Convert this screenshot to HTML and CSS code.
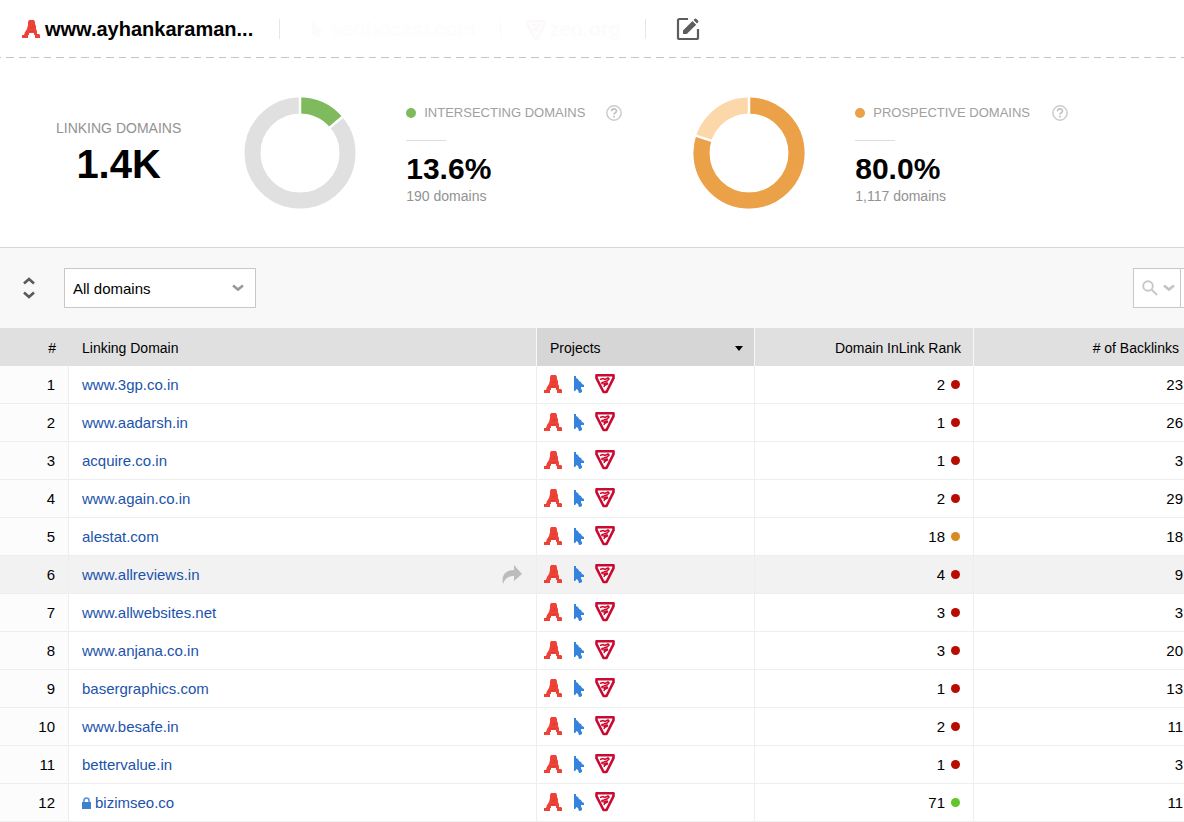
FILE: index.html
```html
<!DOCTYPE html>
<html lang="en">
<head>
<meta charset="utf-8">
<title>Domain comparison</title>
<link rel="stylesheet" href="styles.css">
</head>
<body>
<svg class="sprites" aria-hidden="true">
  <symbol id="i-a" viewBox="0 0 18 18"><path fill="#ee4236" d="M7 0h5l1 2v2l1 2v3l1 2v3h2l1 1v3h-5v-3h-1v-2H7v2H6v3H0v-3h2l1-3 2-3 1-4V2z"/><path fill="#cf3b38" d="M8 7h2V5h1v3H8zM7 11h5v1H7z" opacity=".7"/></symbol>
  <symbol id="i-cursor" viewBox="0 0 11 18"><path fill="#3583dc" d="M1 1h2v2l2 1 1 2 2 1 1 2 2 1v2H8v2l1 1v2l-2 1H6l-1-3-2-1v1l-1 1H1z"/></symbol>
  <symbol id="i-tri" viewBox="0 0 20 21"><path fill="#fff" stroke="#cb0a31" stroke-width="2.600" stroke-linejoin="round" d="M1.500 2.200h17v3l-7 13.800h-3l-7-13.800z"/><path fill="none" stroke="#cb0a31" stroke-width="1.500" d="M5 6.500l3-1 2 1 3-1.500 1 1-2 2-3 1-2 .5v1l2 .5 3-1 .5 1-3 1.500-.5 1.500"/></symbol>
  <symbol id="i-chevron" viewBox="0 0 12 8"><path fill="none" stroke="currentColor" stroke-width="2.600" d="M1 1.500L6 5.500l5-4"/></symbol>
  <symbol id="i-help" viewBox="0 0 16 16"><circle cx="8" cy="8" r="7.200" fill="none" stroke="#ccc" stroke-width="1.500"/><path fill="none" stroke="#c2c2c2" stroke-width="1.700" d="M5.500 6.300c0-3.300 5-3.200 5-.3 0 1.800-2.500 1.800-2.500 3.500M8 10.700v1.800"/></symbol>
  <symbol id="i-share" viewBox="0 0 20 19"><path fill="#bcbcbc" d="M12 0l8 9-8 7v-5C7 11 3 13 1 19-1 10 4 5 12 5z"/></symbol>
  <symbol id="i-lock" viewBox="0 0 9 12"><path fill="none" stroke="#5b93dc" stroke-width="1.600" d="M2 6V3.500a2.500 2.500 0 0 1 5 0V6"/><path fill="#3f7fd0" d="M0 5h9v7H0z"/></symbol>
</svg>

<header class="tabs">
  <div class="tab tab-main"><svg class="ico-a"><use href="#i-a"/></svg><span>www.ayhankaraman...</span></div>
  <div class="tab tab-second"><svg class="ico-cursor"><use href="#i-cursor"/></svg><span>seohocasi.com</span></div>
  <div class="tab tab-third"><svg class="ico-tri"><use href="#i-tri"/></svg><span>zeo.org</span></div>
  <button class="edit" aria-label="Edit projects"><svg width="24" height="24" viewBox="0 0 24 24"><path fill="none" stroke="#5d5d5d" stroke-width="2.200" d="M12 2H3.500Q2 2 2 3.500v17Q2 22 3.500 22h17q1.500 0 1.500-1.500V12"/><path fill="#5d5d5d" d="M7 13.500L16.500 4l3.700 3.700L10.700 17H7zM17.500 3l1-1q1-1 2 0l1.500 1.500q1 1 0 2l-1 1z"/></svg></button>
</header>

<section class="summary">
  <div class="total"><div class="total-label">LINKING DOMAINS</div><div class="total-value">1.4K</div></div>
  <svg class="donut" viewBox="0 0 112 112" role="img" aria-label="13.6%">
    <g fill="none" stroke-width="16" transform="rotate(-90 56 56)"><circle cx="56" cy="56" r="47.500" stroke="#e0e0e0"/><circle cx="56" cy="56" r="47.500" stroke="#7fba5d" pathLength="1000" stroke-dasharray="136 864"/></g>
    <path stroke="#fff" stroke-width="2.500" d="M56 56V-1M56 56L99.400 19"/>
  </svg>
  <div class="stat">
    <div class="stat-head"><i class="dot green-soft"></i><span>INTERSECTING DOMAINS</span><button class="help" aria-label="Help"><svg><use href="#i-help"/></svg></button></div>
    <div class="rule"></div>
    <div class="stat-value">13.6%</div>
    <div class="stat-sub">190 domains</div>
  </div>
  <svg class="donut donut-second" viewBox="0 0 112 112" role="img" aria-label="80.0%">
    <g fill="none" stroke-width="16" transform="rotate(-90 56 56)"><circle cx="56" cy="56" r="47.500" stroke="#fcd7a9"/><circle cx="56" cy="56" r="47.500" stroke="#eaa148" pathLength="1000" stroke-dasharray="800 200"/></g>
    <path stroke="#fff" stroke-width="2.500" d="M56 56V-1M56 56L1.800 38.400"/>
  </svg>
  <div class="stat">
    <div class="stat-head"><i class="dot orange-soft"></i><span>PROSPECTIVE DOMAINS</span><button class="help" aria-label="Help"><svg><use href="#i-help"/></svg></button></div>
    <div class="rule"></div>
    <div class="stat-value">80.0%</div>
    <div class="stat-sub">1,117 domains</div>
  </div>
</section>

<section class="toolbar">
  <button class="collapse" aria-label="Collapse summary"><svg width="12" height="22" viewBox="0 0 12 22"><path fill="none" stroke="#5a5a5a" stroke-width="2.600" d="M1 6.500l5-4.500 5 4.500M1 15.500l5 4.500 5-4.500"/></svg></button>
  <div class="select-wrap">
    <select aria-label="Domain filter"><option>All domains</option></select>
    <svg class="chev"><use href="#i-chevron"/></svg>
  </div>
  <div class="search">
    <button class="search-btn" aria-label="Search options"><svg width="16" height="16" viewBox="0 0 16 16"><g fill="none" stroke="#c8c8c8" stroke-width="1.900"><circle cx="6" cy="6" r="4.800"/><path d="M9.500 9.500L15 15"/></g></svg><svg class="chev-sm"><use href="#i-chevron"/></svg></button>
    <input type="text" aria-label="Search">
  </div>
</section>

<table>
  <colgroup><col class="c-num"><col class="c-domain"><col class="c-projects"><col class="c-rank"><col class="c-links"></colgroup>
  <thead><tr><th class="num">#</th><th class="domain">Linking Domain</th><th class="projects"><div class="sort">Projects<i class="caret"></i></div></th><th class="rank">Domain InLink Rank</th><th class="links"># of Backlinks</th></tr></thead>
  <tbody id="rows"></tbody>
</table>
<script src="rows.js"></script>
</body>
</html>
```
FILE: styles.css
```css
* { box-sizing: border-box; }
body { margin: 0; background: #fff; color: #000; font: 14px/18px "Liberation Sans", Arial, sans-serif; overflow-x: hidden; }
button { padding: 0; border: 0; background: none; display: flex; align-items: center; }
svg { display: block; flex: none; }
.sprites { position: absolute; width: 0; height: 0; }
.ico-a { width: 18px; height: 18px; }
.ico-cursor { width: 11px; height: 18px; }
.ico-tri { width: 20px; height: 21px; }

.tabs { display: flex; align-items: center; height: 58px; padding-left: 22px;
  background: repeating-linear-gradient(90deg, #c4c4c4 0 1px, #fff 1px 6px, #c4c4c4 6px 14px, #fff 14px 19px, #c4c4c4 19px 25px) left bottom / 100% 1px no-repeat; }
.tab { display: flex; align-items: center; height: 20px; border-right: 1px solid #e6e6e6; font-size: 20px; line-height: 22px; font-weight: bold; }
.tab-main { gap: 5px; padding-right: 26px; }
.tab-second { gap: 9px; padding: 0 24px 0 31px; color: #fdfdfd; border-color: #fafafa; }
.tab-third { gap: 4px; padding: 0 24px 0 25px; color: #fcfcfc; }
.tab-second svg, .tab-third svg { opacity: .02; }
.edit { margin-left: 30px; }

.summary { display: flex; align-items: center; padding: 39px 0 38px 56px; border-bottom: 1px solid #d6d6d6; }
.total { flex: none; text-align: center; }
.total-label { color: #929292; margin-bottom: 4px; }
.total-value { font-size: 40px; line-height: 46px; font-weight: bold; }
.donut { width: 112px; height: 112px; margin: 0 50px 0 63px; }
.donut-second { margin-left: 71px; }
.stat { flex: none; width: 216px; padding-top: 4px; }
.donut-second + .stat { width: 213px; }
.stat-head { display: flex; align-items: center; height: 18px; font-size: 13px; color: #a0a0a0; }
.dot { display: inline-block; flex: none; width: 10px; height: 10px; border-radius: 50%; }
.stat-head .dot { margin-right: 8px; }
.help { margin-left: auto; }
.help svg { width: 16px; height: 16px; }
.rule { width: 40px; height: 1px; margin: 18px 0 10px; background: #ddd; }
.stat-value { font-size: 30px; line-height: 36px; font-weight: bold; }
.stat-sub { color: #929292; line-height: 19px; }
.green-soft { background: #7fba5d; }
.orange-soft { background: #eaa148; }

.toolbar { display: flex; align-items: center; height: 80px; padding-left: 23px; background: #f8f8f8; overflow: hidden; }
.select-wrap { position: relative; margin-left: 29px; }
select { display: block; appearance: none; width: 192px; height: 40px; padding: 2px 8px 0; border: 1px solid #c8c8c8; border-radius: 0; background: #fff; color: #000; font: 15px/18px "Liberation Sans", Arial, sans-serif; }
.chev { position: absolute; right: 12px; top: 16px; width: 12px; height: 8px; color: #999; pointer-events: none; }
.search { display: flex; margin-left: auto; margin-right: -180px; height: 40px; border: 1px solid #c8c8c8; background: #fff; }
.search-btn { gap: 5px; padding: 0 5px 0 8px; border-right: 1px solid #c8c8c8; }
.chev-sm { width: 12px; height: 8px; color: #c4c4c4; }
.search input { width: 182px; border: 0; padding: 0 8px; }

table { width: 100%; table-layout: fixed; border-collapse: separate; border-spacing: 0; }
.c-num { width: 69px; }
.c-projects { width: 218px; }
.c-rank { width: 219px; }
.c-links { width: 210px; }
th { height: 38px; padding: 2px 12px 0; background: #e0e0e0; font-weight: normal; text-align: left; }
td { height: 38px; padding: 0 12px; border-right: 1px solid #eee; border-bottom: 1px solid #eee; }
th.domain, th.projects, th.rank { border-right: 1px solid #f8f8f8; }
.num { text-align: right; padding-right: 13px; }
td.num { background: #fcfcfc; font-size: 15px; }
.domain { padding-left: 13px; }
td.domain { font-size: 15px; }
th.projects { background: #d6d6d6; padding-left: 13px; padding-right: 11px; }
.sort { display: flex; justify-content: space-between; align-items: center; }
.caret { border: 4px solid transparent; border-top: 5px solid #000; border-bottom: 0; }
.rank { text-align: right; }
.links { text-align: right; }
th.links { padding-right: 5px; }
td.links { padding-right: 1px; border-right: 0; }
td.rank, td.links { font-size: 15px; }
td.rank { padding-right: 13px; }
td.projects { padding: 0 0 2px 7px; }
.link-row, .icons { display: flex; align-items: center; }
.link-row a { color: #1b53ab; text-decoration: none; }
.icons { gap: 11px; }
.lock { width: 9px; height: 12px; margin-right: 4px; }
.share { margin: 0 2px 0 auto; height: 19px; }
.share svg { width: 20px; height: 19px; }
.score { display: flex; justify-content: flex-end; align-items: center; gap: 6px; }
.score .dot { width: 9px; height: 9px; }
.red { background: #b80c00; }
.orange { background: #d98a20; }
.green { background: #62c52b; }
tr.hover td { background: #f2f2f2; }
```
FILE: rows.js
```js
const rows = [
  ["www.3gp.co.in", 2, "red", 23],
  ["www.aadarsh.in", 1, "red", 26],
  ["acquire.co.in", 1, "red", 3],
  ["www.again.co.in", 2, "red", 29],
  ["alestat.com", 18, "orange", 18],
  ["www.allreviews.in", 4, "red", 9],
  ["www.allwebsites.net", 3, "red", 3],
  ["www.anjana.co.in", 3, "red", 20],
  ["basergraphics.com", 1, "red", 13],
  ["www.besafe.in", 2, "red", 11],
  ["bettervalue.in", 1, "red", 3],
  ["bizimseo.co", 71, "green", 11]
];
const hovered = "www.allreviews.in";
const secure = "bizimseo.co";
const icon = (cls, id) => `<svg class="${cls}"><use href="#${id}"/></svg>`;

document.getElementById("rows").innerHTML = rows.map(([domain, rank, color, links], i) => `
  <tr class="${domain === hovered ? "hover" : ""}">
    <td class="num">${i + 1}</td>
    <td class="domain"><div class="link-row">${domain === secure ? icon("lock", "i-lock") : ""}<a href="#">${domain}</a>${domain === hovered ? `<button class="share" aria-label="Open domain">${icon("", "i-share")}</button>` : ""}</div></td>
    <td class="projects"><div class="icons">${icon("ico-a", "i-a")}${icon("ico-cursor", "i-cursor")}${icon("ico-tri", "i-tri")}</div></td>
    <td class="rank"><div class="score">${rank}<i class="dot ${color}"></i></div></td>
    <td class="links">${links}</td>
  </tr>`).join("");
```
